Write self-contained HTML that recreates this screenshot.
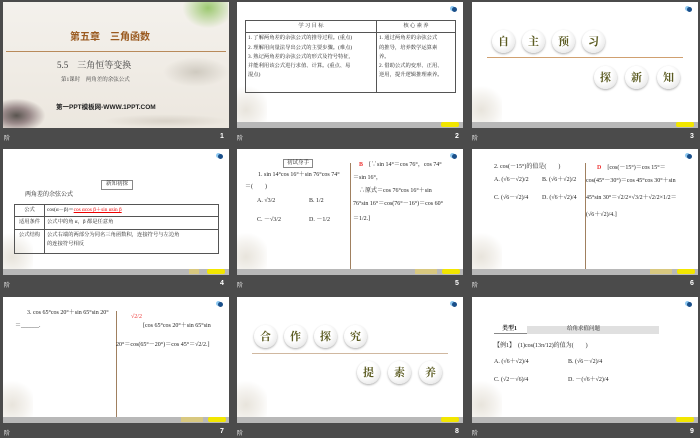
<!DOCTYPE html><html><head><meta charset="utf-8"><style>
*{margin:0;padding:0;box-sizing:border-box}
body{width:700px;height:438px;background:#4b4b4b;position:relative;overflow:hidden;font-family:"Liberation Serif","Noto Serif CJK SC",serif;color:#222}
.s{position:absolute;width:226px;height:126px;background:#fff;overflow:hidden}
.ft{position:absolute;left:0;bottom:0;width:100%;height:6px;background:#b8b8b8}
.btn{position:absolute;bottom:1px;height:5px;width:18px;background:#f2e600;border-radius:2px}
.btn2{position:absolute;bottom:1px;height:5px;width:18px;background:#d8c880}
.lbl{position:absolute;color:#eee;font-size:6px;font-family:"Liberation Sans","Noto Sans CJK SC",sans-serif}
.num{position:absolute;color:#fff;font-size:7px;font-weight:bold;font-family:"Liberation Sans",sans-serif}
.t{position:absolute;font-size:6px;white-space:nowrap;line-height:1.6}
.flw{position:absolute;left:0;bottom:6px;width:30px;height:40px;background:radial-gradient(circle at 30% 70%,#e8e4dc 0,#f4f2ee 40%,#fff 70%)}
.ic{position:absolute;right:6px;top:5px;width:5px;height:5px;border-radius:50%;background:#1a4f8a;box-shadow:-2px -1px 0 #8ec8f0}
.ball{position:absolute;width:23px;height:23px;border-radius:50%;background:radial-gradient(circle at 40% 35%,#fff 40%,#ddd 100%);box-shadow:0 1px 2px #aaa;font-size:11px;font-weight:bold;color:#5a5a20;text-align:center;line-height:23px;font-family:"Noto Serif CJK SC",serif}
.vl{position:absolute;width:1px;background:#a08060}
table{border-collapse:collapse}
td{border:0.7px solid #555;font-size:5.3px;padding:1px 2px;line-height:1.75;vertical-align:top;white-space:nowrap}
</style></head><body>

<!-- slide 1 -->
<div class="s" style="left:3px;top:2px;background:linear-gradient(#f4f1ec,#ece7df)">
<div class="t" style="left:67px;top:26px;font-size:10px;font-weight:bold;color:#9a5a20;font-family:'Noto Sans CJK SC',sans-serif">第五章　三角函数</div>
<div style="position:absolute;left:3px;top:49px;width:220px;height:1px;background:#b88a5a"></div>
<div class="t" style="left:54px;top:56px;font-size:9px;color:#444">5.5　三角恒等变换</div>
<div class="t" style="left:58px;top:74px;font-size:5.5px;color:#444">第1课时　两角差的余弦公式</div>
<div class="t" style="left:53px;top:101px;font-size:6.5px;font-weight:bold;color:#222;font-family:'Liberation Sans','Noto Sans CJK SC',sans-serif">第一PPT模板网-WWW.1PPT.COM</div>
<div style="position:absolute;left:175px;top:0;width:50px;height:30px;background:radial-gradient(ellipse at 60% 20%,#9cc870 0,transparent 60%)"></div>
<div style="position:absolute;left:160px;top:55px;width:66px;height:30px;background:radial-gradient(ellipse,#cfcac0 0,transparent 70%)"></div>
<div style="position:absolute;left:0;top:95px;width:45px;height:31px;background:radial-gradient(ellipse at 30% 60%,#5a5550 0,#9a8a8a 30%,transparent 65%)"></div>
<div style="position:absolute;left:100px;top:112px;width:126px;height:14px;background:radial-gradient(ellipse,#d8d2c8 0,transparent 70%)"></div>
</div>
<div class="lbl" style="left:4px;top:133px">阶</div><div class="num" style="left:220px;top:133px">1</div>

<!-- slide 2 -->
<div class="s" style="left:237px;top:2px"><div class="ic"></div><div class="flw"></div>
<table style="position:absolute;left:8px;top:18px;width:211px"><tr><td style="text-align:center;width:131px">学 习 目 标</td><td style="text-align:center">核 心 素 养</td></tr>
<tr><td style="height:60px">1. 了解两角差的余弦公式的推导过程。(重点)<br>2. 理解用向量法导出公式的主要步骤。(难点)<br>3. 熟记两角差的余弦公式的形式及符号特征,<br>并能利用该公式进行求值、计算。(重点、易<br>混点)</td><td>1. 通过两角差的余弦公式<br>的推导，培养数学运算素<br>养。<br>2. 借助公式的变形、正用、<br>逆用，提升逻辑推理素养。</td></tr></table>
<div class="ft"></div><div class="btn" style="right:4px"></div></div>
<div class="lbl" style="left:237px;top:133px">阶</div><div class="num" style="left:455px;top:133px">2</div>

<!-- slide 3 -->
<div class="s" style="left:472px;top:2px"><div class="ic"></div><div class="flw"></div>
<div class="ball" style="left:20px;top:28px">自</div><div class="ball" style="left:50px;top:28px">主</div><div class="ball" style="left:80px;top:28px">预</div><div class="ball" style="left:110px;top:28px">习</div>
<div style="position:absolute;left:15px;top:55px;width:196px;height:1px;background:#d0a070"></div>
<div class="ball" style="left:122px;top:64px">探</div><div class="ball" style="left:153px;top:64px">新</div><div class="ball" style="left:185px;top:64px">知</div>
<div class="ft"></div><div class="btn" style="right:4px"></div></div>
<div class="lbl" style="left:472px;top:133px">阶</div><div class="num" style="left:690px;top:133px">3</div>

<!-- slide 4 -->
<div class="s" style="left:3px;top:149px"><div class="ic"></div><div class="flw"></div>
<div class="t" style="left:98px;top:31px;border:0.7px solid #888;padding:0 4px;font-size:5.5px;line-height:1.4">新知初探</div>
<div class="t" style="left:22px;top:42px">两角差的余弦公式</div>
<table style="position:absolute;left:11px;top:55px;width:205px"><tr><td style="width:30px;text-align:center">公式</td><td>cos(α－β)＝<span style="color:#e00;text-decoration:underline">cos αcos β＋sin αsin β</span></td></tr>
<tr><td style="text-align:center">适用条件</td><td>公式中的角 α，β 都是任意角</td></tr>
<tr><td style="text-align:center;height:24px">公式结构</td><td>公式右端的两部分为同名三角函数积，连接符号与左边角<br>的连接符号相反</td></tr></table>
<div class="ft"></div><div class="btn2" style="right:30px;width:10px"></div><div class="btn" style="right:4px"></div></div>
<div class="lbl" style="left:4px;top:280px">阶</div><div class="num" style="left:220px;top:280px">4</div>

<!-- slide 5 -->
<div class="s" style="left:237px;top:149px"><div class="ic"></div><div class="flw"></div>
<div class="vl" style="left:113px;top:14px;height:106px"></div>
<div class="t" style="left:46px;top:10px;border:0.7px solid #888;padding:0 3px;font-size:5.5px;line-height:1.3">初试身手</div>
<div class="t" style="left:21px;top:22px">1. sin 14°cos 16°＋sin 76°cos 74°</div>
<div class="t" style="left:8px;top:34px">＝(　　)</div>
<div class="t" style="left:20px;top:48px">A. √3/2</div><div class="t" style="left:72px;top:48px">B. 1/2</div>
<div class="t" style="left:20px;top:67px">C. －√3/2</div><div class="t" style="left:72px;top:67px">D. －1/2</div>
<div class="t" style="left:122px;top:12px"><b style="color:#e33">B</b>　[∵sin 14°＝cos 76°，cos 74°</div>
<div class="t" style="left:116px;top:25px">＝sin 16°，</div>
<div class="t" style="left:122px;top:38px">∴原式＝cos 76°cos 16°＋sin</div>
<div class="t" style="left:116px;top:51px">76°sin 16°＝cos(76°－16°)＝cos 60°</div>
<div class="t" style="left:116px;top:66px">＝1/2.]</div>
<div class="ft"></div><div class="btn2" style="right:26px;width:22px"></div><div class="btn" style="right:3px"></div></div>
<div class="lbl" style="left:237px;top:280px">阶</div><div class="num" style="left:455px;top:280px">5</div>

<!-- slide 6 -->
<div class="s" style="left:472px;top:149px"><div class="ic"></div><div class="flw"></div>
<div class="vl" style="left:113px;top:14px;height:106px"></div>
<div class="t" style="left:22px;top:14px">2. cos(－15°)的值是(　　)</div>
<div class="t" style="left:22px;top:27px">A. (√6－√2)/2</div><div class="t" style="left:70px;top:27px">B. (√6＋√2)/2</div>
<div class="t" style="left:22px;top:45px">C. (√6－√2)/4</div><div class="t" style="left:70px;top:45px">D. (√6＋√2)/4</div>
<div class="t" style="left:125px;top:15px"><b style="color:#e33">D</b>　[cos(－15°)＝cos 15°＝</div>
<div class="t" style="left:114px;top:28px">cos(45°－30°)＝cos 45°cos 30°＋sin</div>
<div class="t" style="left:114px;top:45px">45°sin 30°＝√2/2×√3/2＋√2/2×1/2＝</div>
<div class="t" style="left:114px;top:62px">(√6＋√2)/4.]</div>
<div class="ft"></div><div class="btn2" style="right:26px;width:22px"></div><div class="btn" style="right:3px"></div></div>
<div class="lbl" style="left:472px;top:280px">阶</div><div class="num" style="left:690px;top:280px">6</div>

<!-- slide 7 -->
<div class="s" style="left:3px;top:297px"><div class="ic"></div><div class="flw"></div>
<div class="vl" style="left:113px;top:14px;height:106px"></div>
<div class="t" style="left:24px;top:12px">3. cos 65°cos 20°＋sin 65°sin 20°</div>
<div class="t" style="left:12px;top:25px">＝______.</div>
<div class="t" style="left:128px;top:16px;color:#e33">√2/2</div>
<div class="t" style="left:140px;top:25px">[cos 65°cos 20°＋sin 65°sin</div>
<div class="t" style="left:113px;top:44px">20°＝cos(65°－20°)＝cos 45°＝√2/2.]</div>
<div class="ft"></div><div class="btn2" style="right:26px;width:22px"></div><div class="btn" style="right:3px"></div></div>
<div class="lbl" style="left:4px;top:428px">阶</div><div class="num" style="left:220px;top:428px">7</div>

<!-- slide 8 -->
<div class="s" style="left:237px;top:297px"><div class="ic"></div><div class="flw"></div>
<div class="ball" style="left:17px;top:28px">合</div><div class="ball" style="left:47px;top:28px">作</div><div class="ball" style="left:77px;top:28px">探</div><div class="ball" style="left:107px;top:28px">究</div>
<div style="position:absolute;left:15px;top:56px;width:196px;height:1px;background:#d0b8a0"></div>
<div class="ball" style="left:120px;top:64px">提</div><div class="ball" style="left:151px;top:64px">素</div><div class="ball" style="left:182px;top:64px">养</div>
<div class="ft"></div><div class="btn" style="right:4px"></div></div>
<div class="lbl" style="left:237px;top:428px">阶</div><div class="num" style="left:455px;top:428px">8</div>

<!-- slide 9 -->
<div class="s" style="left:472px;top:297px"><div class="ic"></div><div class="flw"></div>
<div style="position:absolute;left:22px;top:29px;width:165px;height:8px;background:#e0e0e0"></div>
<div style="position:absolute;left:22px;top:29px;width:33px;height:8px;background:#fff;border-bottom:1px solid #888"></div>
<div class="t" style="left:30px;top:28px;font-weight:bold;font-size:6px">类型1</div>
<div class="t" style="left:95px;top:28px;font-size:5.5px">给角求值问题</div>
<div class="t" style="left:22px;top:45px">【例1】　(1)cos(13π/12)的值为(　　)</div>
<div class="t" style="left:22px;top:61px">A. (√6＋√2)/4</div><div class="t" style="left:96px;top:61px">B. (√6－√2)/4</div>
<div class="t" style="left:22px;top:79px">C. (√2－√6)/4</div><div class="t" style="left:96px;top:79px">D. －(√6＋√2)/4</div>
<div class="ft"></div><div class="btn" style="right:4px"></div></div>
<div class="lbl" style="left:472px;top:428px">阶</div><div class="num" style="left:690px;top:428px">9</div>

</body></html>
